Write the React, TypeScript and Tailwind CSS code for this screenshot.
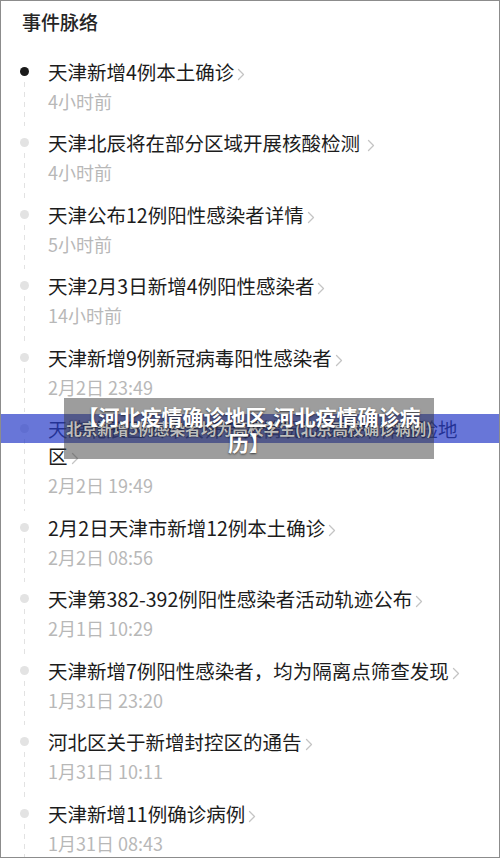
const events = [
  { title: "天津新增4例本土确诊", time: "4小时前" },
  { title: "天津北辰将在部分区域开展核酸检测 ", time: "4小时前" },
  { title: "天津公布12例阳性感染者详情", time: "5小时前" },
  { title: "天津2月3日新增4例阳性感染者", time: "14小时前" },
  { title: "天津新增9例新冠病毒阳性感染者", time: "2月2日 23:49" },
  { title: "天津北辰区公布大筛有关情况及核酸采样检验地区", time: "2月2日 19:49" },
  { title: "2月2日天津市新增12例本土确诊", time: "2月2日 08:56" },
  { title: "天津第382-392例阳性感染者活动轨迹公布", time: "2月1日 10:29" },
  { title: "天津新增7例阳性感染者，均为隔离点筛查发现", time: "1月31日 23:20" },
  { title: "河北区关于新增封控区的通告", time: "1月31日 10:11" },
  { title: "天津新增11例确诊病例", time: "1月31日 08:43" },
];

function Chevron() {
  return (
    <svg
      width="8"
      height="13"
      viewBox="0 0 8 13"
      className="inline-block align-[-1px] ml-[3px]"
      fill="none"
      stroke="#c4c4c4"
      strokeWidth="1.3"
      strokeLinecap="round"
      strokeLinejoin="round"
    >
      <path d="M1.5 1.5 6.5 6.5 1.5 11.5" />
    </svg>
  );
}

function EventItem({ title, time, first }: { title: string; time: string; first: boolean }) {
  return (
    <div className="flex">
      <div className="w-[47px] flex flex-col items-center shrink-0">
        <div
          className={
            first
              ? "w-[9px] h-[9px] rounded-full bg-[#1a1a1a] mt-[9px]"
              : "w-[9px] h-[9px] rounded-full bg-[#e3e3e3] mt-[9px]"
          }
        />
        <div className="w-px flex-1 mt-[6px] mb-[3px] bg-[repeating-linear-gradient(to_bottom,#e2e2e2_0_5px,transparent_5px_10px)]" />
      </div>
      <div className="flex-1 pr-[27px] pb-[15.5px]">
        <div className="text-[19.5px] leading-[27px] text-[#1c1c1c]">
          {title}
          <Chevron />
        </div>
        <div className="mt-[3px] text-[18px] leading-[26px] text-[#b8b8b8]">{time}</div>
      </div>
    </div>
  );
}

export default function App() {
  return (
    <div className="relative w-[500px] h-[858px] overflow-hidden border border-[#8c8c8c] bg-white font-['Noto_Sans_CJK_SC',sans-serif]">
      <div className="h-[42px] flex items-center pl-[21px] text-[19px] font-medium text-[#262626]">
        事件脉络
      </div>
      <div className="pt-[14.5px]">
        {events.map((e, i) => (
          <EventItem key={i} title={e.title} time={e.time} first={i === 0} />
        ))}
      </div>

      {/* watermark overlays */}
      <div className="absolute left-0 right-0 top-[413px] h-[29px] bg-[rgba(40,60,200,0.7)]" />
      <div className="absolute left-[63px] top-[397px] w-[370px] h-[61px] bg-[rgba(60,60,60,0.5)]" />
      <div className="absolute left-[65px] top-[413px] h-[29px] flex items-center text-[15.7px] font-bold text-[#bdbdbd] whitespace-nowrap [text-shadow:0_0_2px_rgba(0,0,0,0.8)]">
        北京新增5例感染者均为高校学生(北京高校确诊病例)
      </div>
      <div className="absolute left-[63px] top-[397px] w-[370px] h-[61px] flex items-center justify-center">
        <div className="w-[352px] text-center text-[21px] leading-[26px] font-bold text-white [text-shadow:0_1px_2px_rgba(0,0,0,0.6)]">
          【河北疫情确诊地区,河北疫情确诊病历】
        </div>
      </div>
    </div>
  );
}
